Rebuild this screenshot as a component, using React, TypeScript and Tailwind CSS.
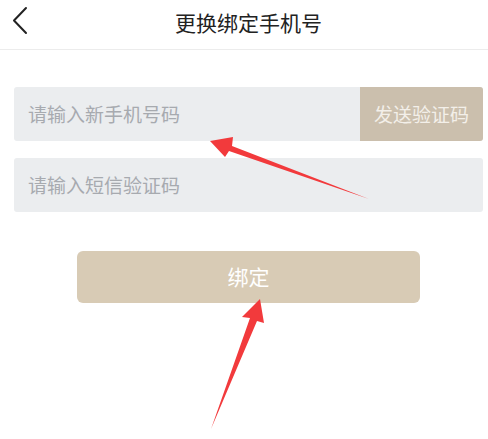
import React from 'react';

const font = { fontFamily: '"Noto Sans CJK SC", "Noto Sans", sans-serif' };

const BackIcon = () => (
  <svg width="17" height="29" viewBox="0 0 17 29" fill="none">
    <path d="M15 2 L3 14.5 L15 27" stroke="#222" strokeWidth="2" strokeLinecap="round" strokeLinejoin="round" />
  </svg>
);

// red annotation arrows drawn over the form
const Arrows = () => (
  <svg className="absolute left-0 top-0 pointer-events-none" width="497" height="439" viewBox="0 0 497 439">
    <polygon points="210,141 233,137 232,146 369,199 229,151 225,157" fill="#f23a3c" />
    <polygon points="260,299 264,323 257,321 211,429 250,318 242,317" fill="#f23a3c" />
  </svg>
);

const App: React.FC = () => {
  return (
    <div className="w-full min-h-[439px] bg-white overflow-hidden" style={font}>
      <div className="relative w-[497px] h-[439px]">
        <div className="relative h-[50px] flex items-center justify-center border-b border-[#ececec]">
          <div className="absolute left-[11px] top-[6px]">
            <BackIcon />
          </div>
          <span className="text-[21px] text-[#222] pb-[3px]">更换绑定手机号</span>
        </div>

        <div className="px-[14px] mt-[37px] flex flex-col gap-[17px]">
          <div className="h-[54px] bg-[#ebedef] rounded-[3px] flex items-center">
            <span className="flex-1 pl-[14px] text-[19px] text-[#a7aaaf]">请输入新手机号码</span>
            <button className="h-full w-[123px] bg-[#cbbfad] rounded-r-[3px] text-[19px] text-[#f3efe9]">
              发送验证码
            </button>
          </div>
          <div className="h-[54px] bg-[#ebedef] rounded-[3px] flex items-center">
            <span className="pl-[14px] text-[19px] text-[#a7aaaf]">请输入短信验证码</span>
          </div>
        </div>

        <div className="mx-[77px] mt-[39px]">
          <button className="w-full h-[52px] bg-[#d8cbb5] rounded-[6px] text-[21px] text-white">绑定</button>
        </div>

        <Arrows />
      </div>
    </div>
  );
};

export default App;
